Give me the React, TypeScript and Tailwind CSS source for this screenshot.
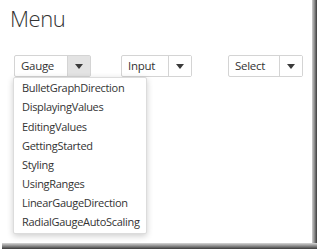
import React from "react";

const items = [
  "BulletGraphDirection",
  "DisplayingValues",
  "EditingValues",
  "GettingStarted",
  "Styling",
  "UsingRanges",
  "LinearGaugeDirection",
  "RadialGaugeAutoScaling",
];

function Arrow() {
  return (
    <svg width="8" height="5" viewBox="0 0 8 5">
      <path d="M0 0 L8 0 L4 5 Z" fill="#3a3a3a" />
    </svg>
  );
}

function Combo({
  label,
  width,
  active,
}: {
  label: string;
  width: string;
  active?: boolean;
}) {
  return (
    <div
      className={`flex h-[22px] ${width} border border-[#d4d4d4] rounded-[2px] bg-white text-[11.5px] tracking-[-0.3px] text-[#333]`}
    >
      <div className="flex-1 flex items-center pl-[6px]">{label}</div>
      <div
        className={`w-[23px] flex items-center justify-center border-l border-[#d4d4d4] ${
          active ? "bg-[#e3e3e3]" : "bg-white"
        }`}
      >
        <Arrow />
      </div>
    </div>
  );
}

export default function App() {
  return (
    <div
      className="w-[317px] h-[249px] bg-white relative overflow-hidden"
      style={{ fontFamily: '"Open Sans", "Noto Sans", sans-serif' }}
    >
      <div className="absolute right-0 top-0 bottom-0 w-[5px] bg-gradient-to-r from-[#cfcfcf] via-[#8a8a8a] to-[#3c3c3c]" />
      <div className="absolute left-[2px] right-0 bottom-0 h-[6px] bg-gradient-to-b from-[#d8d8d8] via-[#8a8a8a] to-[#3c3c3c]" />
      <div className="pl-[10px] pt-[2px] text-[22px] tracking-[-0.4px] font-light text-[#333] leading-[32px]">
        Menu
      </div>
      <div className="flex pl-[14px] pt-[21px]">
        <div className="relative">
          <Combo label="Gauge" width="w-[77px]" active />
          <div className="absolute left-[-1px] top-[22px] w-[134px] bg-white border border-[#dcdcdc] rounded-[2px] shadow-[0_2px_6px_rgba(0,0,0,0.2)] pt-[1px] pb-[1px] z-10">
            {items.map((it) => (
              <div
                key={it}
                className="h-[19.15px] flex items-center pl-[8px] text-[11px] tracking-[-0.3px] text-[#333]"
              >
                {it}
              </div>
            ))}
          </div>
        </div>
        <div className="ml-[30px]">
          <Combo label="Input" width="w-[71px]" />
        </div>
        <div className="ml-[36px]">
          <Combo label="Select" width="w-[75px]" />
        </div>
      </div>
    </div>
  );
}
